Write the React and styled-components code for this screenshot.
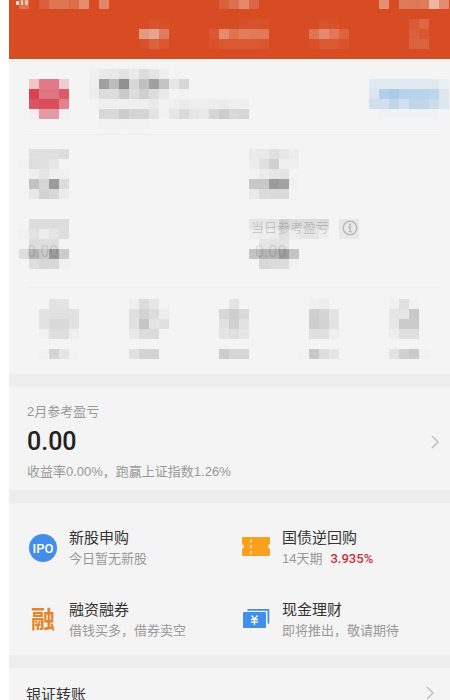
import React from "react"
import styled, { createGlobalStyle } from "styled-components"

const GlobalStyle = createGlobalStyle`
    * {
        box-sizing: border-box;
    }

    html {
        scrollbar-width: none;
    }

    body {
        margin: 0;
        background: #fff;
        color: #333;
        font-family: "Liberation Sans", "Noto Sans CJK SC", sans-serif;
        font-size: 13px;
    }

    button {
        padding: 0;
        border: 0;
        background: none;
        color: inherit;
        font: inherit;
        text-align: left;
        cursor: pointer;
    }

    svg {
        display: block;
        flex: none;
        overflow: visible;
    }
`

const Page = styled.div`
    min-height: 100vh;
    margin-left: 9px;
    background: #ededed;
`

const Header = styled.header`
    height: 59px;
    background: #d84c24;
    border-bottom: 1px solid #c4512f;
`

const StatusBar = styled.div`
    display: flex;
    justify-content: space-between;
    align-items: flex-end;
    height: 9px;
    padding: 0 1px 0 6px;
    margin-bottom: 10px;
    overflow: hidden;
`

const StatusGroup = styled.div`
    display: flex;
    align-items: flex-end;
`

const TabBar = styled.nav`
    display: flex;
    gap: 40px;
    padding: 0 21px 0 130px;
`

const MoreButton = styled.button`
    margin-left: auto;
`

const Section = styled.section`
    background: #f4f4f4;
    margin-bottom: 13px;
`

const Profile = styled.div`
    display: flex;
    align-items: flex-start;
    height: 75px;
    padding: 10px 1px 0 20px;
`

const Avatar = styled.div`
    padding-top: 10px;
    margin-right: 20px;
`

const ProfileButton = styled.button`
    margin: 10px 0 0 auto;
`

const Divider = styled.hr`
    height: 1px;
    margin: 0 9px 0 18px;
    border: 0;
    background: #ededed;
`

const StatGrid = styled.div`
    display: grid;
    grid-template-columns: 1fr 1fr;
    gap: 20px 40px;
    padding: 14px 11px 18px 10px;
`

const Stat = styled.div`
    display: grid;
    justify-content: start;

    > * {
        grid-area: 1 / 1;
    }
`

const StatText = styled.div`
    display: flex;
    flex-direction: column;
    gap: 4px;
    padding-left: ${(props) => props.$indent}px;
    line-height: 18px;
    color: rgba(0, 0, 0, 0.18);
`

const StatValue = styled.span`
    margin-top: ${(props) => (props.$alone ? 24 : 2)}px;
    padding-left: 4px;
    font-family: Roboto, sans-serif;
    font-size: 16px;
    color: rgba(0, 0, 0, 0.12);
`

const StatLabel = styled.span`
    display: flex;
    align-items: center;
    gap: 13px;
`

const ShortcutRow = styled.div`
    display: flex;
    justify-content: space-between;
    padding: 11px 21px 15px 30px;
`

const Summary = styled.div`
    padding: 15px 10px 8px 18px;
    line-height: 20px;
    color: #999;
`

const AmountRow = styled.div`
    display: flex;
    align-items: center;
    justify-content: space-between;
    height: 40px;
`

const Amount = styled.strong`
    font-family: Roboto, sans-serif;
    font-size: 25px;
    font-weight: 500;
    color: #222;
`

const ServiceGrid = styled.div`
    display: grid;
    grid-template-columns: 1fr 1fr;
    gap: 30px 20px;
    padding: 24px 15px 14px 20px;
`

const ServiceButton = styled.button`
    display: flex;
    align-items: center;
    gap: 12px;
    line-height: 21px;
    white-space: nowrap;
`

const ServiceTitle = styled.div`
    font-size: 15px;
`

const ServiceNote = styled.div`
    color: #999;
`

const Rate = styled.span`
    margin-left: 8px;
    font-family: Roboto, sans-serif;
    font-weight: 500;
    color: #c9303a;
`

const TransferRow = styled.button`
    display: flex;
    align-items: center;
    justify-content: space-between;
    width: 100%;
    height: 50px;
    padding: 0 15px 0 17px;
    font-size: 15px;
`

const CELL = 10

// cell: "." is empty, two digits are a grey, six digits are a full colour
const toColor = (cell) => (cell.length === 2 ? `#${cell}${cell}${cell}` : `#${cell}`)

function Mosaic({ rows }) {
    const grid = rows.map((row) => row.split(" "))
    const width = Math.max(...grid.map((row) => row.length)) * CELL

    return (
        <svg width={width} height={grid.length * CELL} shapeRendering="crispEdges" aria-hidden="true">
            {grid.map((row, y) => row.map((cell, x) => (
                cell !== "." && (
                    <rect key={`${x}-${y}`} x={x * CELL} y={y * CELL} width={CELL} height={CELL} fill={toColor(cell)} />
                )
            )))}
        </svg>
    )
}

const statusLeft = [". db5f3a de7553 de7553 dd6c49 e48d70 . e18668"]
const statusMiddle = ["db613d dd6f4e e38a6d db6643"]
const statusRight = [". e48f75 . df7b5a de7755 df7b5a f0b6a4 e38c70"]

const tabs = [
    [". d9522b d9502a", "e39a82 e4a692 df7c5c", "d9502a db623e da5731"],
    [". . . d9512a d9522c d9512a", "da5731 e58b70 de7352 e17e60 e07a59 e0795a", "d9502a da5832 da5832 da5832 da5832 da5731"],
    [". d9522b d9512a .", "df7453 e68873 e07657 db633f", "d9502a da5a34 da5832 d9542d"],
]

const more = ["da5a35 dd6846", "db5f3a d95630", "dc6340 dc6340"]

const avatar = [
    "f1c4ca e0788a e0788a f1ccd0",
    "da4252 dd7682 de7682 dc5966",
    "dd5564 da4d5c da4d5c e4828e",
    "f4eeee e49aa5 e49aa5 f4efef",
]

const profileName = [
    "f0 e9 e8 e2 ea dc e5 ee",
    "ee a0 bc 90 d8 c0 a0 c4 e6 d8",
    "ed dc dd ca dc d0 dd ea . f2",
    ". ef ef ef ef ef ea f2 ef eb ee ee ed ec ee ef",
    ". d8 d8 cc d4 d4 e3 f2 e6 da e5 e8 d6 cd d8 d6",
    ". f2 f2 f1 f2 f2",
]

const profileAction = [
    "e0e8f0 e0e8f0 e0e8f0 e0e8f0 e0e8f0 e0e8f0 e0e8f0 ebeff2",
    "dce6f2 b4cfea aacbea b6d1eb b8d2ec bad3ec bed5ec dce7f2",
    "d1dfef d1dfef c1d5eb d1dfef c2d6ea c2d6ea ccdcec dce7f1",
    ". f0f3f5 f0f3f5 f0f3f5 f0f3f5 f0f3f5 f0f3f5 .",
]

const stats = [
    [". e0 e0 e0 dd", "f1 dd e0 e6 .", ". ee e6 ef f0", ". c2 d6 9c dc", ". e8 d2 d8 ec"],
    ["ea e9 e0 e6 ec", "ec e0 d0 ef ef", "f2 ec e6 e4 .", "c8 c8 9c a2 f1", "e9 dc da da ."],
    [". dd dd dd dd", "f0 e2 ec e4 de", ". de de de .", "de b4 c8 9c cb", ". de d6 d8 f0"],
    [
        "e6 e6 e4 d2 dd dc db db . e7 e7",
        "ef ee ed e0 ee e7 e6 ee . e9 e9",
        ". e6 e4 e3 .",
        "c4 b5 b6 a0 c4",
        ". d8 dc dc f1",
    ],
]

const shortcuts = [
    [". e3 e3 .", "e2 e1 e0 e1", "e2 d9 d9 e1", "f1 de de ef", ". . . .", "f1 d4 e5 f2"],
    ["ef dc e7 .", "e0 d4 dc ed", "e0 c5 e4 e0", "e9 dc db .", ". . . .", "e0 d4 d3 ."],
    [". e4 .", "d7 ce d8", "e1 d0 e2", "e4 df e6", ". . .", "cd d6 d6"],
    [". f0 ed .", ". d0 d5 e3", ". ce d3 e3", ". e0 e0 ef", ". . . .", "f2 c8 de e6"],
    ["f0 e0 f1 .", "e5 e5 c8 .", "e7 cb cb .", "ee e0 e0 .", ". . . .", "e3 d0 c9 f1"],
]

const Signal = () => (
    <svg width="14" height="9" aria-hidden="true">
        <rect x="4" width="10" height="9" fill="#dd7554" />
        <rect x="1" y="1" width="3" height="4" rx="1" fill="#fbe6df" />
        <rect x="6" y="0" width="2" height="5" rx="1" fill="#f7cfc2" />
        <rect x="10" y="0" width="3" height="5" rx="1" fill="#f4c3b4" />
    </svg>
)

const Chevron = () => (
    <svg width="10" height="14" viewBox="0 0 10 14" fill="none" stroke="#c2c2c2" strokeWidth="1.6" aria-hidden="true">
        <path d="M2 1l6 6-6 6" />
    </svg>
)

const InfoIcon = () => (
    <svg width="16" height="16" viewBox="0 0 16 16" fill="none" stroke="#b5b5b5" strokeWidth="1.3" aria-hidden="true">
        <circle cx="8" cy="8" r="6.8" />
        <path d="M6.6 7H8.2V11.4M6.4 11.6H9.8" />
        <circle cx="8" cy="4.6" r="0.5" fill="#b5b5b5" />
    </svg>
)

const IpoIcon = () => (
    <svg width="28" height="28" viewBox="0 0 28 28" aria-hidden="true">
        <circle cx="14" cy="14" r="14" fill="#438ee8" />
        <text x="14" y="19" textAnchor="middle" fontFamily="Roboto" fontSize="13" fontWeight="500" fill="#fff">IPO</text>
    </svg>
)

const TicketIcon = () => (
    <svg width="28" height="28" viewBox="0 1 28 28" aria-hidden="true">
        <path
            d="M1 4H27Q28 4 28 5V11.2A2.5 2.5 0 0 0 28 16V22Q28 23 27 23H1Q0 23 0 22V16A2.5 2.5 0 0 0 0 11.2V5Q0 4 1 4Z"
            fill="#f9a11f"
        />
        <path d="M9 6.5V9.5M9 12V15.5M9 18V21" stroke="#fde6bd" strokeWidth="1.4" />
    </svg>
)

const MarginIcon = () => (
    <svg width="28" height="28" viewBox="0 0 28 28" aria-hidden="true">
        <text x="14" y="22" textAnchor="middle" fontFamily="Noto Sans CJK SC" fontSize="24" fontWeight="700" fill="#e5832a">融</text>
    </svg>
)

const CashIcon = () => (
    <svg width="28" height="28" viewBox="0 1 28 28" fill="none" aria-hidden="true">
        <path d="M5.5 4.8H26.4V18.5" stroke="#438ee8" strokeWidth="1.8" />
        <rect x="1" y="7" width="23" height="16" rx="1" fill="#438ee8" />
        <path d="M9.5 10.5L12.5 14L15.5 10.5M12.5 14V20M9 14.5H16M9 17.2H16" stroke="#fff" strokeWidth="1.3" />
    </svg>
)

const services = [
    { title: "新股申购", note: "今日暂无新股", icon: <IpoIcon /> },
    { title: "国债逆回购", note: "14天期", rate: "3.935%", icon: <TicketIcon /> },
    { title: "融资融券", note: "借钱买多，借券卖空", icon: <MarginIcon /> },
    { title: "现金理财", note: "即将推出，敬请期待", icon: <CashIcon /> },
]

function AccountHeader() {
    return (
        <Header>
            <StatusBar>
                <StatusGroup>
                    <Signal />
                    <Mosaic rows={statusLeft} />
                </StatusGroup>
                <Mosaic rows={statusMiddle} />
                <Mosaic rows={statusRight} />
            </StatusBar>
            <TabBar>
                {tabs.map((rows, index) => (
                    <button type="button" key={index}><Mosaic rows={rows} /></button>
                ))}
                <MoreButton type="button"><Mosaic rows={more} /></MoreButton>
            </TabBar>
        </Header>
    )
}

function App() {
    return (
        <Page>
            <GlobalStyle />
            <AccountHeader />

            <Section>
                <Profile>
                    <Avatar><Mosaic rows={avatar} /></Avatar>
                    <Mosaic rows={profileName} />
                    <ProfileButton type="button"><Mosaic rows={profileAction} /></ProfileButton>
                </Profile>
                <Divider />
                <StatGrid>
                    <Stat><Mosaic rows={stats[0]} /></Stat>
                    <Stat><Mosaic rows={stats[1]} /></Stat>
                    <Stat>
                        <Mosaic rows={stats[2]} />
                        <StatText $indent={4}>
                            <StatValue $alone>0.00</StatValue>
                        </StatText>
                    </Stat>
                    <Stat>
                        <Mosaic rows={stats[3]} />
                        <StatText $indent={2}>
                            <StatLabel>当日参考盈亏 <InfoIcon /></StatLabel>
                            <StatValue>0.00</StatValue>
                        </StatText>
                    </Stat>
                </StatGrid>
                <Divider />
                <ShortcutRow>
                    {shortcuts.map((rows, index) => (
                        <button type="button" key={index}><Mosaic rows={rows} /></button>
                    ))}
                </ShortcutRow>
            </Section>

            <Section>
                <Summary>
                    <div>2月参考盈亏</div>
                    <AmountRow>
                        <Amount>0.00</Amount>
                        <Chevron />
                    </AmountRow>
                    <div>收益率0.00%，跑赢上证指数1.26%</div>
                </Summary>
            </Section>

            <Section>
                <ServiceGrid>
                    {services.map((item) => (
                        <ServiceButton type="button" key={item.title}>
                            {item.icon}
                            <div>
                                <ServiceTitle>{item.title}</ServiceTitle>
                                <ServiceNote>
                                    {item.note}
                                    {item.rate && <Rate>{item.rate}</Rate>}
                                </ServiceNote>
                            </div>
                        </ServiceButton>
                    ))}
                </ServiceGrid>
            </Section>

            <Section>
                <TransferRow type="button">
                    银证转账
                    <Chevron />
                </TransferRow>
            </Section>
        </Page>
    )
}

export default App
